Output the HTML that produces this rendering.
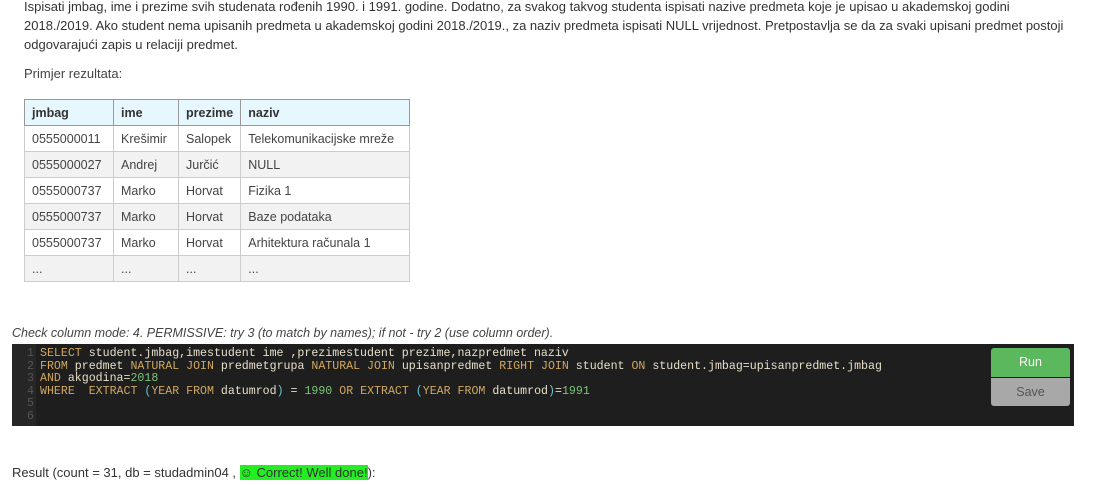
<!DOCTYPE html>
<html><head><meta charset="utf-8"><style>
body{margin:0;background:#fff;font-family:"Liberation Sans",sans-serif;color:#333;font-size:13px;width:1100px;height:485px;overflow:hidden;position:relative}
.p{position:absolute;left:24px;top:-3px;width:1070px;line-height:19px;white-space:nowrap}
table{position:absolute;left:24px;top:99px;border-collapse:collapse;font-size:12.5px}
td,th{border:1px solid #ccc;height:25px;padding:0 7px;text-align:left;font-weight:normal;color:#444}
th{background:#e6f7fd;border-color:#999;font-weight:bold;color:#333}
tr:nth-child(odd) td{background:#f2f2f2}
.cm{position:absolute;left:12px;top:326px;font-style:italic;color:#444;font-size:12.5px}
.ed{position:absolute;left:12px;top:344px;width:1062px;height:82px;background:#1e1e1e;font-family:"Liberation Mono",monospace;font-size:11.6px}
.g{position:absolute;left:0;top:0;width:24px;height:82px;background:#262626;color:#555;text-align:right;padding-top:4px;box-sizing:border-box}
.g div,.c div{height:12.6px;line-height:12.6px}
.g div{padding-right:2px}
.c{position:absolute;left:28px;top:4px;color:#e8dfc8;white-space:pre}
.k{color:#d1a860}.n{color:#7cc57a}.b{color:#6cc4d8}
.run{position:absolute;left:979px;top:4px;width:79px;height:29px;background:#5cb85c;color:#fff;font-family:"Liberation Sans",sans-serif;font-size:12.5px;text-align:center;line-height:29px;border-radius:3px 3px 0 0}
.save{position:absolute;left:979px;top:34px;width:79px;height:28px;background:#a8a8a8;color:#555;font-family:"Liberation Sans",sans-serif;font-size:12.5px;text-align:center;line-height:28px;border-radius:0 0 3px 3px}
.r{position:absolute;left:12px;top:465px;color:#333}
.ok{background:#22ee22;color:#333}
</style></head><body>
<div class="p">Ispisati jmbag, ime i prezime svih studenata rođenih 1990. i 1991. godine. Dodatno, za svakog takvog studenta ispisati nazive predmeta koje je upisao u akademskoj godini<br>2018./2019. Ako student nema upisanih predmeta u akademskoj godini 2018./2019., za naziv predmeta ispisati NULL vrijednost. Pretpostavlja se da za svaki upisani predmet postoji<br>odgovarajući zapis u relaciji predmet.<div style="margin-top:10px;color:#444">Primjer rezultata:</div></div>
<table>
<tr><th style="width:74px">jmbag</th><th style="width:50px">ime</th><th style="width:47px">prezime</th><th style="width:154px">naziv</th></tr>
<tr><td>0555000011</td><td>Krešimir</td><td>Salopek</td><td>Telekomunikacijske mreže</td></tr>
<tr><td>0555000027</td><td>Andrej</td><td>Jurčić</td><td>NULL</td></tr>
<tr><td>0555000737</td><td>Marko</td><td>Horvat</td><td>Fizika 1</td></tr>
<tr><td>0555000737</td><td>Marko</td><td>Horvat</td><td>Baze podataka</td></tr>
<tr><td>0555000737</td><td>Marko</td><td>Horvat</td><td>Arhitektura računala 1</td></tr>
<tr><td>...</td><td>...</td><td>...</td><td>...</td></tr>
</table>
<div class="cm">Check column mode: 4. PERMISSIVE: try 3 (to match by names); if not - try 2 (use column order).</div>
<div class="ed">
<div class="g"><div>1</div><div>2</div><div>3</div><div>4</div><div>5</div><div>6</div></div>
<div class="c"><div><span class="k">SELECT</span> student.jmbag,imestudent ime ,prezimestudent prezime,nazpredmet naziv</div><div><span class="k">FROM</span> predmet <span class="k">NATURAL JOIN</span> predmetgrupa <span class="k">NATURAL JOIN</span> upisanpredmet <span class="k">RIGHT JOIN</span> student <span class="k">ON</span> student.jmbag=upisanpredmet.jmbag</div><div><span class="k">AND</span> akgodina=<span class="n">2018</span></div><div><span class="k">WHERE  EXTRACT</span> <span class="b">(</span><span class="k">YEAR FROM</span> datumrod<span class="b">)</span> = <span class="n">1990</span> <span class="k">OR EXTRACT</span> <span class="b">(</span><span class="k">YEAR FROM</span> datumrod<span class="b">)</span>=<span class="n">1991</span></div></div>
<div class="run">Run</div><div class="save">Save</div>
</div>
<div class="r">Result (count = 31, db = studadmin04 , <span class="ok">☺ Correct! Well done!</span>):</div>
</body></html>
